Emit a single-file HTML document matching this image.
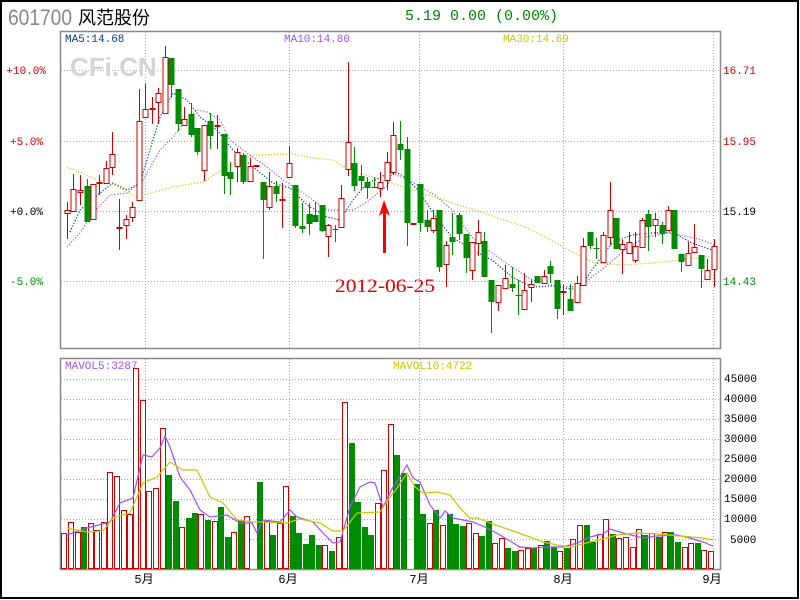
<!DOCTYPE html>
<html><head><meta charset="utf-8"><style>
html,body{margin:0;padding:0;background:#fff;}
#wrap{position:relative;width:800px;height:600px;overflow:hidden;}
svg{position:absolute;left:0;top:0;}
</style></head><body><div id="wrap">
<svg id="s" width="800" height="600" xmlns="http://www.w3.org/2000/svg" font-family="Liberation Mono, monospace">
<rect x="1" y="1" width="797" height="597" fill="#fff" stroke="#000" stroke-width="2"/>
<text x="8" y="25" font-family="Liberation Sans, sans-serif" font-size="22" fill="#888" textLength="64" lengthAdjust="spacingAndGlyphs">601700</text>
<text x="78" y="24" font-family="Liberation Sans, Noto Sans CJK SC, sans-serif" font-size="18" fill="#000">风范股份</text>
<text x="405" y="20" font-size="15" fill="#008800">5.19 0.00 (0.00%)</text>
<g id="grid" stroke="#aaa" stroke-dasharray="1,2" stroke-width="1"></g>
<rect x="60.5" y="31.5" width="660" height="317" fill="none" stroke="#888" stroke-width="1.5"/>
<rect x="60.5" y="358.5" width="660" height="211" fill="none" stroke="#888" stroke-width="1.5"/>
<text x="70" y="76" font-family="Liberation Sans, sans-serif" font-weight="bold" font-size="26" fill="#d4d4d4">CFi.CN</text>
<text x="65" y="42" font-size="11" fill="#003d99">MA5:14.68</text>
<text x="284" y="42" font-size="11" fill="#a050ff">MA10:14.80</text>
<text x="503" y="42" font-size="11" fill="#c8c800">MA30:14.69</text>
<text x="65" y="369" font-size="11" fill="#a050ff">MAVOL5:3287</text>
<text x="393" y="369" font-size="11" fill="#c8c800">MAVOL10:4722</text>
<g font-size="11" text-anchor="end">
<text x="46" y="74" fill="#d00000">+10.0%</text>
<text x="43" y="145" fill="#d00000">+5.0%</text>
<text x="43" y="215" fill="#000">+0.0%</text>
<text x="43" y="285" fill="#008800">-5.0%</text>
</g>
<g font-size="11">
<text x="723" y="74" fill="#d00000">16.71</text>
<text x="723" y="145" fill="#d00000">15.95</text>
<text x="723" y="215" fill="#000">15.19</text>
<text x="723" y="285" fill="#008800">14.43</text>
</g>
<g font-size="11" fill="#000">
<text x="724" y="382">45000</text><text x="724" y="402">40000</text><text x="724" y="422">35000</text>
<text x="724" y="442">30000</text><text x="724" y="462">25000</text><text x="724" y="482">20000</text>
<text x="724" y="502">15000</text><text x="724" y="522">10000</text><text x="730" y="543">5000</text>
</g>
<g font-size="12" fill="#000" font-family="Liberation Mono, Noto Sans CJK SC, sans-serif" text-anchor="middle">
<text x="144" y="583">5月</text><text x="288" y="583">6月</text><text x="419" y="583">7月</text><text x="563" y="583">8月</text><text x="712" y="583">9月</text>
</g>
<g id="lines" fill="none"></g>
<g id="cand"></g>
<g id="vol"></g>
<g id="vlines" fill="none"></g>
<text x="335" y="292" font-family="Liberation Serif, serif" font-size="19" fill="#e00000" textLength="100" lengthAdjust="spacingAndGlyphs">2012-06-25</text>
<polygon points="384,200 379,216 383,213 383,253 386,253 386,213 390,216" fill="#f00"/>
</svg></div>
<script>
var NS="http://www.w3.org/2000/svg";
function el(p,t,a){var e=document.createElementNS(NS,t);for(var k in a)e.setAttribute(k,a[k]);document.getElementById(p).appendChild(e);return e;}
[70,141,211,281].forEach(function(y){el('grid','line',{x1:61,x2:720,y1:y+.5,y2:y+.5});});
for(var y=379;y<=539;y+=20)el('grid','line',{x1:61,x2:720,y1:y+.5,y2:y+.5});
[145,289,419,563,713].forEach(function(x){el('grid','line',{x1:x+.5,x2:x+.5,y1:32,y2:348});el('grid','line',{x1:x+.5,x2:x+.5,y1:359,y2:569});});
function pl(p,pts,c,dash){var a={points:pts.map(function(q){return q.join(',')}).join(' '),stroke:c,'stroke-width':1.2};if(dash)a['stroke-dasharray']='1.2,1.8';el(p,'polyline',a);}
pl('lines',[[67,167],[93,178],[110,183],[137,197],[173,187],[203,182],[227,167],[253,155],[293,154],[313,158],[333,160],[353,172],[377,178],[392,183],[412,190],[438,198],[452,203],[475,210],[498,218],[525,227],[545,237],[572,252],[595,263],[625,265],[652,263],[672,261],[705,257],[712,257]],'#c8c800',1);
pl('lines',[[67,247],[80,233],[93,213],[110,195],[127,193],[143,180],[160,150],[173,137],[187,120],[197,110],[207,112],[220,120],[230,140],[247,153],[267,167],[283,180],[303,193],[327,210],[353,210],[367,202],[388,185],[392,173],[412,182],[435,195],[452,210],[472,237],[492,253],[512,267],[532,280],[552,285],[572,287],[588,280],[605,267],[625,250],[645,237],[668,233],[685,236],[702,240],[715,245]],'#a050ff',1);
pl('lines',[[70,232],[80,210],[100,193],[113,183],[127,190],[140,183],[150,150],[160,117],[173,93],[187,100],[200,117],[217,130],[233,150],[253,167],[273,183],[290,188],[307,205],[327,217],[340,220],[353,200],[367,183],[380,178],[392,170],[405,177],[418,190],[438,220],[452,237],[472,250],[492,260],[512,277],[532,287],[552,286],[578,290],[592,270],[612,243],[632,235],[652,233],[672,232],[692,243],[712,250]],'#003d99',1);
var C=[[67,210,213,202,239,'r'],[73,189,211,174,211,'r'],[80,190,192,175,205,'r'],[87,186,222,179,222,'g'],[93,184,219,184,220,'r'],[99,182,183,175,195,'r'],[106,168,183,161,183,'r'],[112,154,167,132,175,'r'],[119,227,228,199,250,'r'],[126,219,225,215,239,'r'],[132,207,217,202,222,'r'],[139,121,200,89,200,'r'],[145,109,117,84,117,'r'],[152,108,109,97,124,'r'],[158,93,102,88,124,'r'],[165,57,113,46,113,'r'],[171,58,85,58,98,'g'],[178,89,124,89,131,'g'],[184,119,125,107,125,'r'],[191,114,135,103,137,'g'],[197,128,152,128,155,'g'],[204,125,170,125,181,'r'],[210,121,136,113,149,'g'],[217,125,126,115,149,'r'],[224,134,176,134,194,'g'],[230,172,179,162,195,'g'],[237,152,166,148,182,'r'],[243,155,182,153,184,'g'],[250,166,181,158,181,'r'],[256,165,166,165,166,'r'],[263,182,200,182,259,'g'],[269,186,207,172,210,'r'],[276,186,194,181,202,'g'],[282,199,200,183,228,'r'],[289,163,177,146,177,'r'],[295,185,226,185,228,'g'],[302,226,229,203,233,'g'],[309,214,224,203,235,'g'],[315,215,222,202,222,'g'],[322,205,231,205,232,'g'],[328,225,236,224,257,'r'],[335,229,230,225,242,'g'],[341,198,227,185,227,'r'],[348,142,169,62,176,'r'],[354,163,186,147,191,'g'],[361,176,181,165,190,'g'],[367,182,188,177,199,'g'],[374,187,188,177,188,'g'],[380,182,188,172,197,'r'],[387,162,180,152,190,'r'],[393,135,172,122,175,'r'],[400,144,150,121,160,'g'],[407,149,223,137,246,'g'],[413,223,224,223,224,'r'],[420,184,223,184,232,'g'],[427,220,227,210,232,'g'],[433,218,230,210,233,'r'],[439,210,267,210,272,'g'],[446,245,264,241,287,'r'],[452,237,242,213,255,'g'],[459,215,234,213,240,'g'],[466,234,258,234,273,'g'],[472,242,270,242,280,'r'],[478,232,243,220,256,'r'],[484,241,277,232,277,'g'],[491,280,302,280,333,'g'],[498,285,302,285,311,'r'],[505,278,288,265,288,'r'],[512,284,288,267,292,'g'],[518,295,296,280,315,'g'],[524,290,309,273,309,'r'],[531,284,287,279,302,'r'],[537,276,283,276,283,'g'],[544,276,283,270,283,'r'],[550,266,274,261,283,'g'],[557,280,309,280,319,'g'],[563,291,292,284,315,'r'],[570,299,311,284,311,'g'],[577,283,302,276,302,'r'],[583,246,285,238,285,'r'],[590,232,246,232,249,'g'],[596,248,249,238,259,'g'],[603,235,262,232,262,'r'],[610,210,237,182,245,'r'],[616,218,249,218,249,'g'],[622,244,249,240,274,'r'],[629,242,253,232,253,'r'],[635,246,260,232,263,'r'],[642,220,247,218,247,'r'],[648,214,227,210,251,'g'],[655,219,225,213,237,'r'],[662,225,234,222,244,'g'],[668,210,230,206,230,'r'],[674,210,249,210,249,'g'],[681,254,262,254,272,'g'],[688,253,265,242,265,'r'],[694,247,252,224,252,'r'],[701,255,269,255,288,'g'],[707,270,279,259,279,'r'],[714,246,269,239,287,'r']];
C.forEach(function(c){var col=c[5]=='r'?'#d00000':'#008c00';
el('cand','line',{x1:c[0]+.5,x2:c[0]+.5,y1:c[3],y2:c[4],stroke:col,'stroke-width':1});
var h=Math.max(1,c[2]-c[1]);
if(c[5]=='r')el('cand','rect',{x:c[0]-2,y:c[1]+.5,width:5,height:h,fill:'#fff',stroke:col,'stroke-width':1});
else el('cand','rect',{x:c[0]-2.5,y:c[1],width:6,height:h,fill:col});});
var V=[[64,533,'r'],[71,522,'r'],[78,532,'r'],[84,527,'g'],[91,523,'r'],[97,530,'r'],[104,522,'r'],[110,472,'r'],[117,476,'r'],[124,510,'r'],[130,514,'r'],[136,368,'r'],[143,400,'r'],[149,491,'r'],[156,488,'r'],[163,428,'r'],[169,475,'g'],[176,501,'g'],[182,527,'r'],[189,518,'g'],[195,513,'g'],[201,514,'r'],[208,520,'g'],[215,521,'r'],[221,507,'g'],[228,537,'g'],[234,532,'r'],[241,520,'g'],[247,516,'r'],[260,482,'g'],[267,521,'r'],[273,535,'g'],[280,523,'r'],[286,486,'r'],[293,516,'g'],[299,533,'g'],[306,544,'g'],[312,535,'g'],[319,545,'g'],[325,545,'r'],[332,551,'g'],[339,537,'r'],[345,402,'r'],[352,443,'g'],[358,502,'g'],[365,527,'g'],[371,535,'g'],[378,503,'r'],[384,470,'r'],[391,424,'r'],[397,455,'g'],[404,473,'g'],[417,484,'g'],[423,514,'g'],[430,523,'r'],[436,510,'g'],[443,525,'r'],[450,514,'g'],[456,524,'g'],[463,526,'g'],[469,523,'r'],[476,533,'r'],[482,536,'g'],[489,521,'g'],[495,543,'r'],[502,538,'r'],[508,548,'g'],[515,551,'g'],[521,550,'r'],[528,548,'r'],[534,548,'g'],[541,545,'r'],[547,541,'g'],[554,547,'g'],[560,551,'r'],[567,548,'g'],[573,539,'r'],[580,525,'r'],[587,525,'g'],[593,542,'g'],[600,534,'r'],[606,519,'r'],[613,534,'g'],[619,538,'r'],[626,537,'r'],[633,547,'r'],[639,529,'r'],[645,535,'g'],[652,533,'r'],[659,537,'g'],[665,532,'r'],[671,532,'g'],[678,542,'g'],[685,547,'r'],[691,543,'r'],[698,543,'g'],[704,550,'r'],[711,551,'r']];
V.forEach(function(v){var col=v[2]=='r'?'#d00000':'#008c00';
if(v[2]=='r')el('vol','rect',{x:v[0]-2.5,y:v[1]+.5,width:5,height:568-v[1],fill:'#fff',stroke:col,'stroke-width':1});
else el('vol','rect',{x:v[0]-3,y:v[1],width:6,height:569-v[1],fill:col});});
pl('vlines',[[67,535],[87,528],[110,522],[120,503],[133,498],[143,455],[152,457],[160,448],[165,436],[170,447],[180,477],[190,490],[200,510],[210,517],[227,515],[240,523],[252,523],[257,533],[263,520],[280,522],[290,510],[297,517],[313,522],[323,533],[333,543],[340,542],[350,507],[360,487],[370,482],[375,483],[383,507],[393,487],[397,482],[407,465],[413,478],[420,482],[430,505],[440,518],[445,511],[453,518],[473,522],[487,528],[500,535],[520,547],[533,548],[547,547],[563,547],[577,543],[590,537],[603,534],[610,529],[623,533],[643,538],[657,536],[677,535],[690,538],[703,542],[713,546]],'#a050ff');
pl('vlines',[[67,528],[87,532],[103,531],[113,518],[130,513],[143,483],[157,477],[170,462],[183,470],[197,470],[210,497],[223,503],[237,520],[253,522],[263,522],[287,523],[300,519],[320,523],[333,531],[343,531],[357,513],[380,512],[390,497],[397,488],[407,473],[415,487],[423,493],[437,492],[450,495],[460,508],[470,518],[478,518],[490,523],[510,530],[530,537],[543,542],[557,545],[570,547],[590,542],[603,539],[617,535],[637,533],[657,534],[680,536],[703,538],[713,540]],'#c8c800');
</script>
</body></html>
